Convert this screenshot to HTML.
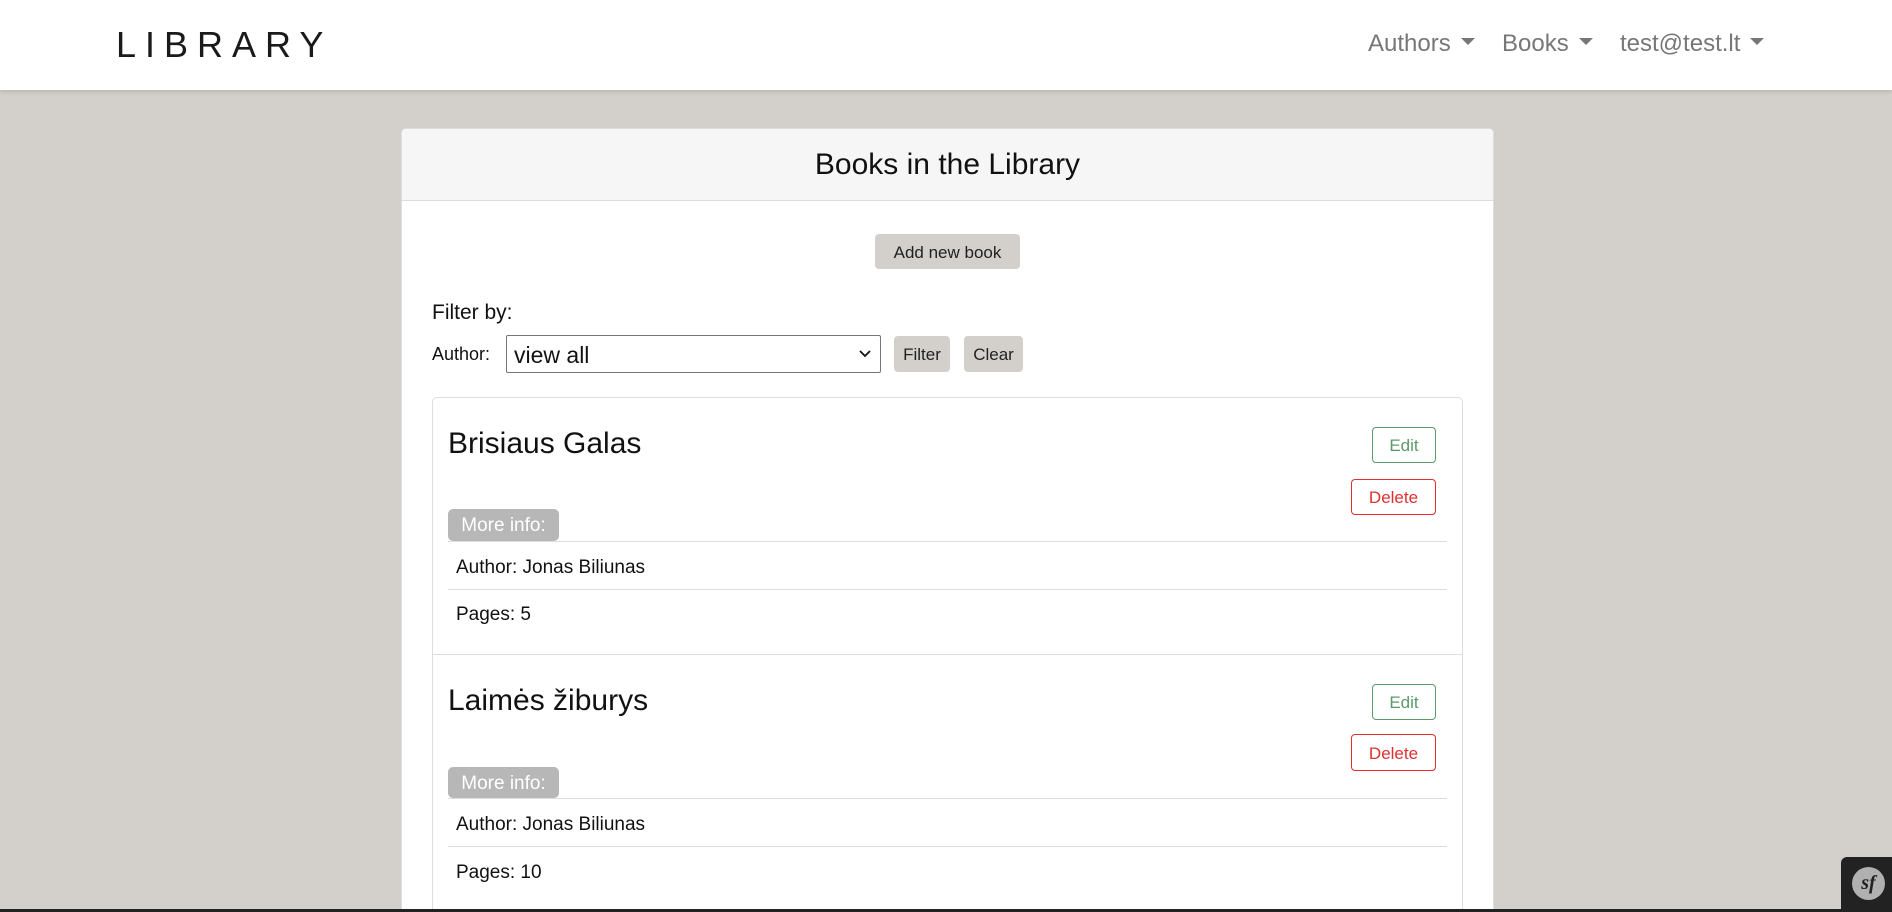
<!DOCTYPE html>
<html style="width:1892px;height:912px;overflow:hidden"><head><meta charset="utf-8"><style>
*{box-sizing:border-box;margin:0;padding:0}
body{width:1892px;height:912px;overflow:hidden;background:#d3d0cb;font-family:"Liberation Sans",sans-serif;color:#111;position:relative}
.a{position:absolute;white-space:nowrap}
.nav{position:absolute;left:0;top:0;width:1892px;height:90px;background:#fff;box-shadow:0 2px 4px rgba(0,0,0,.12)}
.caret{display:inline-block;width:0;height:0;border-left:7px solid transparent;border-right:7px solid transparent;border-top:7px solid #777;vertical-align:middle;margin-left:10px;position:relative;top:-3px}
.navi{color:#777;font-size:24px;top:30px}
.btn{position:absolute;background:#d3d0cb;border-radius:4px;display:flex;align-items:center;justify-content:center;font-size:17px;color:#222;padding-top:2px}
.ob{position:absolute;border-radius:4px;background:#fff;display:flex;align-items:center;justify-content:center;font-size:17px;padding-top:2px}
.badge{position:absolute;background:#b7b7b7;color:#fff;border-radius:5px;font-size:19px;display:flex;align-items:center;justify-content:center;padding-top:2px}
.hl{position:absolute;height:1px;background:#ddd}
</style></head><body>
<div class="nav"></div>
<div class="a" style="left:116px;top:24px;font-size:36px;letter-spacing:9px;color:#1a1a1a">LIBRARY</div>
<div class="a navi" style="left:1368px">Authors<span class="caret"></span></div>
<div class="a navi" style="left:1502px">Books<span class="caret"></span></div>
<div class="a navi" style="left:1620px">test@test.lt<span class="caret"></span></div>

<div style="position:absolute;left:401px;top:128px;width:1093px;height:784px;background:#fff;border:1px solid #ddd;border-bottom:none;border-radius:5px 5px 0 0"></div>
<div style="position:absolute;left:402px;top:129px;width:1091px;height:72px;background:#f6f6f6;border-bottom:1px solid #ddd;border-radius:5px 5px 0 0"></div>
<div class="a" style="left:401px;width:1093px;text-align:center;top:148px;font-size:30px">Books in the Library</div>

<div class="btn" style="left:875px;top:234px;width:145px;height:35px">Add new book</div>
<div class="a" style="left:432px;top:301px;font-size:21px">Filter by:</div>
<div class="a" style="left:432px;top:344px;font-size:18px">Author:</div>
<div style="position:absolute;left:506px;top:335px;width:375px;height:38px;border:1px solid #767676;border-radius:2px;background:#fff"></div>
<div class="a" style="left:514px;top:342px;font-size:23px">view all</div>
<svg class="a" style="left:858px;top:349px" width="14" height="10"><path d="M2 2 L7 7 L12 2" stroke="#111" stroke-width="1.8" fill="none"/></svg>
<div class="btn" style="left:894px;top:336px;width:56px;height:36px">Filter</div>
<div class="btn" style="left:964px;top:336px;width:59px;height:36px">Clear</div>

<div style="position:absolute;left:432px;top:397px;width:1031px;height:515px;border:1px solid #ddd;border-bottom:none;border-radius:5px 5px 0 0"></div>
<div class="hl" style="left:432px;top:654px;width:1031px"></div>

<div class="a" style="left:448px;top:427px;font-size:30px">Brisiaus Galas</div>
<div class="ob" style="left:1372px;top:427px;width:64px;height:36px;border:1px solid #5a9a6a;color:#5a9a6a">Edit</div>
<div class="ob" style="left:1351px;top:479px;width:85px;height:36px;border:1px solid #e03030;color:#e03030">Delete</div>
<div class="badge" style="left:448px;top:509px;width:111px;height:32px">More info:</div>
<div class="hl" style="left:448px;top:541px;width:999px"></div>
<div class="a" style="left:456px;top:557px;font-size:19px">Author: Jonas Biliunas</div>
<div class="hl" style="left:448px;top:589px;width:999px"></div>
<div class="a" style="left:456px;top:604px;font-size:19px">Pages: 5</div>

<div class="a" style="left:448px;top:684px;font-size:30px">Laimės žiburys</div>
<div class="ob" style="left:1372px;top:684px;width:64px;height:36px;border:1px solid #5a9a6a;color:#5a9a6a">Edit</div>
<div class="ob" style="left:1351px;top:734px;width:85px;height:37px;border:1px solid #e03030;color:#e03030">Delete</div>
<div class="badge" style="left:448px;top:767px;width:111px;height:31px">More info:</div>
<div class="hl" style="left:448px;top:798px;width:999px"></div>
<div class="a" style="left:456px;top:814px;font-size:19px">Author: Jonas Biliunas</div>
<div class="hl" style="left:448px;top:846px;width:999px"></div>
<div class="a" style="left:456px;top:862px;font-size:19px">Pages: 10</div>

<div style="position:absolute;left:0;top:909px;width:1892px;height:3px;background:#222"></div>
<div style="position:absolute;left:1841px;top:857px;width:51px;height:55px;background:#222;border-radius:6px 0 0 0"></div>
<div style="position:absolute;left:1852px;top:867px;width:33px;height:33px;border-radius:50%;background:#b0b0b0;color:#222;font:italic bold 20px 'Liberation Serif',serif;display:flex;align-items:center;justify-content:center">sf</div>
</body></html>
